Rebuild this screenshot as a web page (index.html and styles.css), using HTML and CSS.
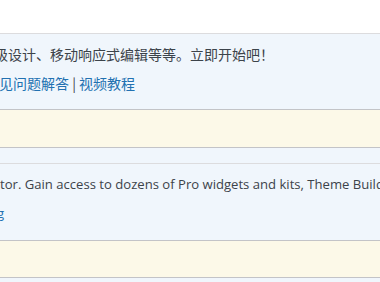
FILE: index.html
```html
<!DOCTYPE html>
<html lang="zh-CN">
<head>
<meta charset="utf-8">
<link rel="stylesheet" href="styles.css">
</head>
<body>
<div class="list">
  <div class="blank"></div>
  <div class="row first">
    <p class="desc cjk"><span class="cut-cjk">级设计、移动响应式编辑等等。立即开始吧！</span></p>
    <p class="meta cjk"><span class="cut-meta"><a href="#">见问题解答</a> | <a href="#">视频教程</a></span></p>
  </div>
  <div class="notice n1"></div>
  <div class="spacer"></div>
  <div class="row second">
    <p class="desc"><span class="cut-en">tor. Gain access to dozens of Pro widgets and kits, Theme Build</span></p>
    <p class="meta"><a href="#" class="cut-g">g</a></p>
  </div>
  <div class="notice n2"></div>
  <div class="spacer tail"></div>
</div>
</body>
</html>
```

FILE: styles.css
```css
html, body {
  margin: 0;
  padding: 0;
  background: #ffffff;
}
body {
  width: 380px;
  height: 282px;
  overflow: hidden;
  font-family: "Open Sans", "Noto Sans CJK SC", sans-serif;
  font-size: 13.1px;
  color: #3c434a;
}
.list {
  display: flex;
  flex-direction: column;
}
.blank {
  height: 33px;
  background: #ffffff;
}
.row {
  background: #f0f6fc;
  border-top: 1px solid #dcdcde;
  overflow: hidden;
  white-space: nowrap;
}
.row.first {
  height: 75px;
}
.row.second {
  height: 76px;
}
.desc, .meta {
  margin: 0;
  line-height: 20px;
}
.desc {
  padding-top: 10px;
}
.meta {
  padding-top: 9px;
}
.cjk {
  font-family: "Noto Sans CJK SC", "Open Sans", sans-serif;
  font-size: 14px;
}
.cut-cjk {
  display: inline-block;
  margin-left: -6px;
}
.cut-meta {
  display: inline-block;
  margin-left: -1px;
}
.cut-en {
  display: inline-block;
  margin-left: 0;
}
.cut-g {
  display: inline-block;
  margin-left: -3px;
}
a {
  color: #2271b1;
  text-decoration: none;
}
.notice {
  background: #fcf9e8;
  border-top: 1px solid #c3c4c7;
}
.notice.n1 {
  height: 37px;
}
.notice.n2 {
  height: 36px;
}
.spacer {
  height: 15px;
  background: #f0f6fc;
  border-top: 1px solid #c3c4c7;
}
.spacer.tail {
  height: 4px;
}
```
